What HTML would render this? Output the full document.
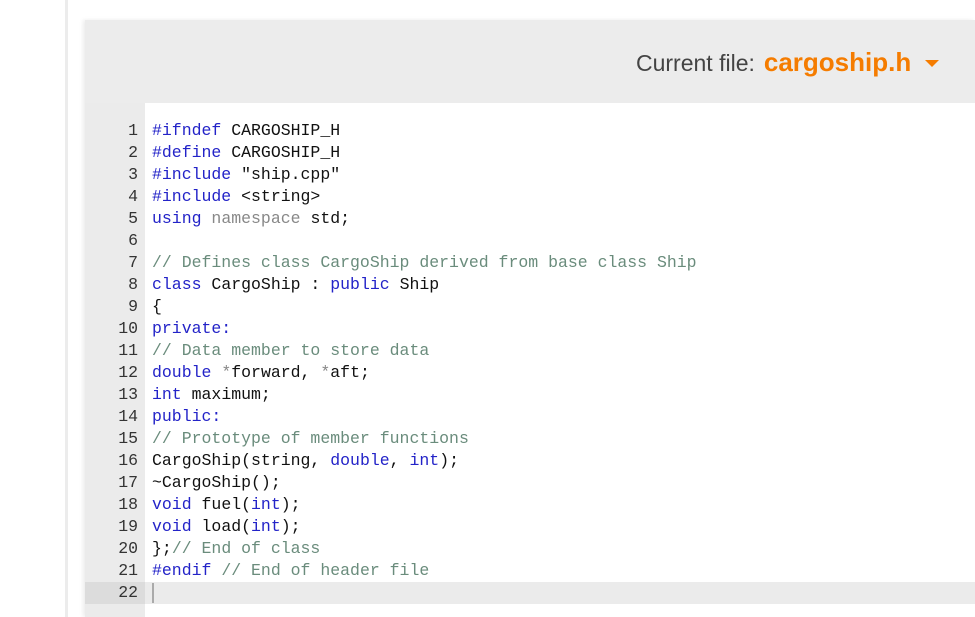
<!DOCTYPE html>
<html><head><meta charset="utf-8"><style>
html,body{margin:0;padding:0;width:975px;height:617px;overflow:hidden;background:#fff;font-family:"Liberation Sans",sans-serif}
.vl{position:absolute;left:65px;top:0;width:3px;height:617px;background:#ececec}
.panel{position:absolute;left:85px;top:20px;width:890px;height:597px;background:#fff;box-shadow:-2px 0 4px rgba(0,0,0,0.08)}
.hdr{position:absolute;left:0;top:0;width:890px;height:83px;background:#ececec}
.cf{position:absolute;left:551px;top:27px;font-size:23px;color:#444;white-space:nowrap}
.cf b{color:#f57c00;font-weight:bold;font-size:26px;margin-left:9px}
.tri{position:absolute;left:840px;top:40px;width:0;height:0;border-left:7px solid transparent;border-right:7px solid transparent;border-top:7px solid #f57c00}
.gut{position:absolute;left:0;top:83px;width:60px;height:514px;background:#ebebeb}
.code{position:absolute;left:0;top:100px;width:890px;font-family:"Liberation Mono",monospace;font-size:16.5px;letter-spacing:0}
.r{height:22px;line-height:22px;white-space:pre;position:relative}
.n{display:inline-block;width:53px;text-align:right;color:#333;margin-right:14px}
.hl{background:#ebebeb}
.hl .n{background:#dcdcdc;width:60px;box-sizing:border-box;padding-right:7px;margin-right:7px}
.k{color:#2323c8}.c{color:#6a8c7c}.g{color:#888}.t{color:#111}
.cur{display:inline-block;width:2px;height:20px;background:#aaa;vertical-align:middle}
</style></head><body>
<div class="vl"></div>
<div class="panel">
<div class="hdr"><div class="cf">Current file:<b>cargoship.h</b></div><div class="tri"></div></div>
<div class="gut"></div>
<div class="code t">
<div class="r"><span class="n">1</span><span class="k">#ifndef</span> CARGOSHIP_H</div>
<div class="r"><span class="n">2</span><span class="k">#define</span> CARGOSHIP_H</div>
<div class="r"><span class="n">3</span><span class="k">#include</span> "ship.cpp"</div>
<div class="r"><span class="n">4</span><span class="k">#include</span> &lt;string&gt;</div>
<div class="r"><span class="n">5</span><span class="k">using</span> <span class="g">namespace</span> std;</div>
<div class="r"><span class="n">6</span></div>
<div class="r"><span class="n">7</span><span class="c">// Defines class CargoShip derived from base class Ship</span></div>
<div class="r"><span class="n">8</span><span class="k">class</span> CargoShip : <span class="k">public</span> Ship</div>
<div class="r"><span class="n">9</span>{</div>
<div class="r"><span class="n">10</span><span class="k">private:</span></div>
<div class="r"><span class="n">11</span><span class="c">// Data member to store data</span></div>
<div class="r"><span class="n">12</span><span class="k">double</span> <span class="g">*</span>forward, <span class="g">*</span>aft;</div>
<div class="r"><span class="n">13</span><span class="k">int</span> maximum;</div>
<div class="r"><span class="n">14</span><span class="k">public:</span></div>
<div class="r"><span class="n">15</span><span class="c">// Prototype of member functions</span></div>
<div class="r"><span class="n">16</span>CargoShip(string, <span class="k">double</span>, <span class="k">int</span>);</div>
<div class="r"><span class="n">17</span>~CargoShip();</div>
<div class="r"><span class="n">18</span><span class="k">void</span> fuel(<span class="k">int</span>);</div>
<div class="r"><span class="n">19</span><span class="k">void</span> load(<span class="k">int</span>);</div>
<div class="r"><span class="n">20</span>};<span class="c">// End of class</span></div>
<div class="r"><span class="n">21</span><span class="k">#endif</span> <span class="c">// End of header file</span></div>
<div class="r hl"><span class="n">22</span><span class="cur"></span></div>
</div>
</div>
</body></html>
